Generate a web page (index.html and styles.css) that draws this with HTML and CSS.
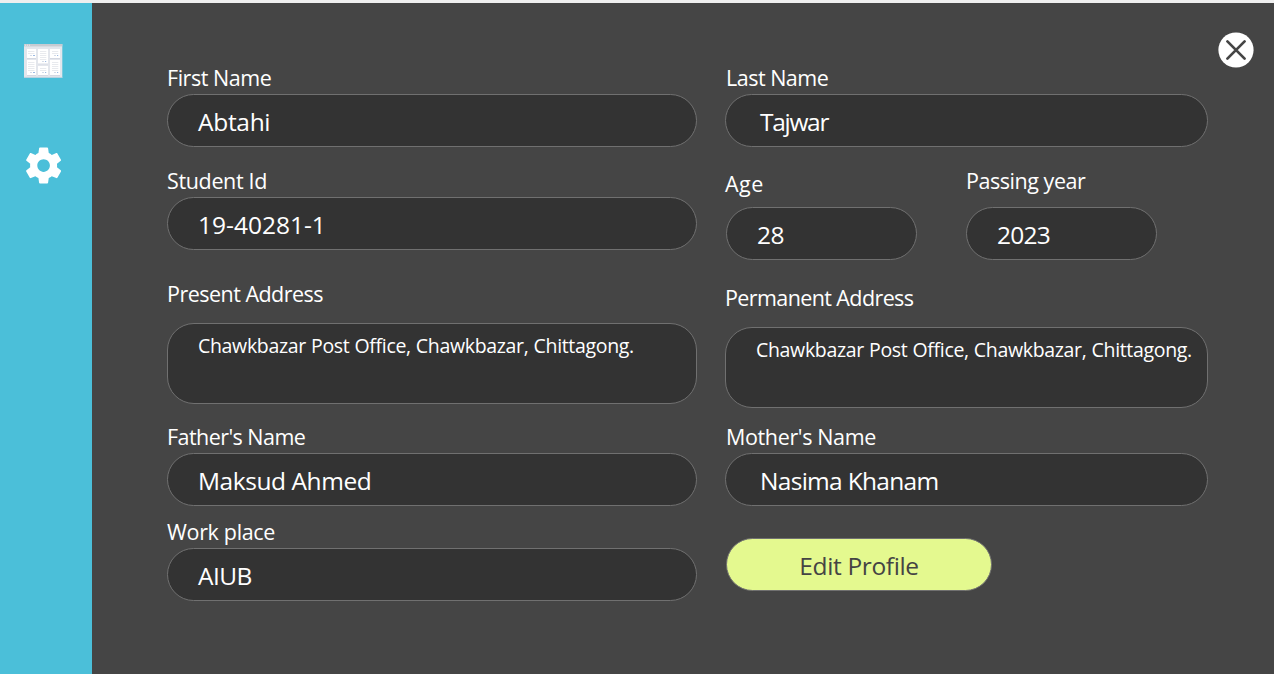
FILE: index.html
```html
<!DOCTYPE html>
<html lang="en">
<head>
<meta charset="utf-8">
<title>Profile</title>
<link rel="stylesheet" href="styles.css">
</head>
<body>
<div class="app">
  <nav class="sidebar">
    <svg class="board-icon" width="39" height="34" viewBox="0 0 39 34">
      <rect width="38.3" height="33.7" fill="#e3e6ec"/>
      <rect width="38.3" height="2.4" fill="#c6cbd2"/>
      <path d="M1 1.2h1M3 1.2h1M5 1.2h1" stroke="#e8ebef" stroke-width="1"/>
      <path d="M0 33.4h38.5" stroke="#b9cfdd" stroke-width=".8"/>
      <g fill="#cfd3de"><path d="M3 14h9v.8H3zM14 19.5h10v.8H14zM26 14h10v.8H26zM3 31h9v.8H3zM14 31h10v.8H14zM26 31h10v.8H26z"/></g>
      <g fill="#fff"><path d="M3 5h9v9H3zM14 5h10v14.5H14zM26 5h10v9H26zM3 16h9v15H3zM14 22h10v9H14zM26 16h10v15H26z"/></g>
      <path d="M4 7.5h6.5M4 9.5h6.5M16 7.5h6.3M16 9.5h6.3M16 11.5h6.3M16 13.5h6.3M16 15.5h6.3M28 7.5h6.3M28 9.5h6.3M4 18.5h6.5M4 20.5h6.5M4 22.5h6.5M4 24.5h6.5M4 26.5h6.5M16 24.5h6.3M16 26.5h6.3M28 18.5h6.3M28 20.5h6.3M28 22.5h6.3M28 24.5h6.3M28 26.5h6.3" stroke="#e8eaee"/>
      <path d="M6 11.5h2M30 11.5h2M18 17.5h2M6 28.5h2M18 28.5h2M30 28.5h2" stroke="#d3dbe8"/>
      <path d="M9 11.5h2M33 11.5h1.2M21 17.5h1.2M9 28.5h2M21 28.5h1.2M33 28.5h1.2" stroke="#9bbae3"/>
    </svg>
    <svg class="gear-icon" width="43.2" height="43.2" viewBox="0 0 24 24">
      <path fill="#fff" d="M19.43 12.98c.04-.32.07-.64.07-.98s-.03-.66-.07-.98l2.11-1.65c.19-.15.24-.42.12-.64l-2-3.46c-.12-.22-.39-.3-.61-.22l-2.49 1c-.52-.4-1.08-.73-1.69-.98l-.38-2.65C14.46 2.18 14.25 2 14 2h-4c-.25 0-.46.18-.49.42l-.38 2.65c-.61.25-1.17.59-1.69.98l-2.49-1c-.23-.09-.49 0-.61.22l-2 3.46c-.13.22-.07.49.12.64l2.11 1.65c-.04.32-.07.65-.07.98s.03.66.07.98l-2.11 1.65c-.19.15-.24.42-.12.64l2 3.46c.12.22.39.3.61.22l2.49-1c.52.4 1.08.73 1.69.98l.38 2.65c.03.24.24.42.49.42h4c.25 0 .46-.18.49-.42l.38-2.65c.61-.25 1.17-.59 1.69-.98l2.49 1c.23.09.49 0 .61-.22l2-3.46c.12-.22.07-.49-.12-.64l-2.11-1.65zM12 15.5c-1.93 0-3.5-1.57-3.5-3.5s1.57-3.5 3.5-3.5 3.5 1.57 3.5 3.5-1.57 3.5-3.5 3.5z"/>
    </svg>
  </nav>
  <main class="profile">
    <section class="column left">
      <div class="field first"><div class="label">First Name</div><div class="box">Abtahi</div></div>
      <div class="field student"><div class="label">Student Id</div><div class="box">19-40281-1</div></div>
      <div class="field address present"><div class="label">Present Address</div><div class="box">Chawkbazar Post Office, Chawkbazar, Chittagong.</div></div>
      <div class="field father"><div class="label">Father's Name</div><div class="box">Maksud Ahmed</div></div>
      <div class="field work"><div class="label">Work place</div><div class="box">AIUB</div></div>
    </section>
    <section class="column right">
      <div class="field last"><div class="label">Last Name</div><div class="box">Tajwar</div></div>
      <div class="pair">
        <div class="field age"><div class="label">Age</div><div class="box">28</div></div>
        <div class="field passing"><div class="label">Passing year</div><div class="box">2023</div></div>
      </div>
      <div class="field address permanent"><div class="label">Permanent Address</div><div class="box">Chawkbazar Post Office, Chawkbazar, Chittagong.</div></div>
      <div class="field mother"><div class="label">Mother's Name</div><div class="box">Nasima Khanam</div></div>
      <button class="edit">Edit Profile</button>
    </section>
    <svg class="close" width="36" height="36" viewBox="0 0 36 36">
      <circle cx="18" cy="18" r="17.6" fill="#fff"/>
      <path d="M9.4 9.4l17.2 17.2M26.6 9.4L9.4 26.6" stroke="#454545" stroke-width="2.7" stroke-linecap="round"/>
    </svg>
  </main>
</div>
</body>
</html>
```
FILE: styles.css
```css
* { box-sizing: border-box; }
body {
  margin: 0;
  background: #454545;
  color: #fff;
  font-family: "Open Sans", "Noto Sans", sans-serif;
}
.app {
  display: flex;
  height: 674px;
  border-top: 3px solid #efefef;
  overflow: hidden;
}
.sidebar {
  width: 92px;
  flex: none;
  background: #4bbfd9;
  display: flex;
  flex-direction: column;
  padding: 41px 0 0 24px;
}
.board-icon { display: block; }
.gear-icon { display: block; margin: 65.5px 0 0 -2px; }
.profile {
  flex: 1;
  display: flex;
  padding: 60px 0 0 75px;
}
.column { display: flex; flex-direction: column; }
.left { width: 530px; }
.right { width: 483px; margin-left: 28px; }
.label {
  height: 28px;
  line-height: 30px;
  margin-bottom: 3px;
  font-size: 21.5px;
  white-space: nowrap;
}
.box {
  height: 53px;
  padding: 1px 0 0 30px;
  border: 1px solid #707070;
  border-radius: 27px;
  background: #333;
  font-size: 24.5px;
  line-height: 51px;
  white-space: nowrap;
}
.address .label { margin-bottom: 16px; }
.address .box {
  height: 81px;
  padding-top: 8px;
  font-size: 19.5px;
  line-height: 27px;
  letter-spacing: -0.32px;
  word-spacing: 0.3px;
}
.student { margin-top: 19px; }
.present { margin-top: 29px; }
.father { margin-top: 18px; }
.work { margin-top: 11px; }
.pair {
  display: flex;
  align-items: flex-start;
  gap: 49px;
  margin: 19px 0 0 1px;
}
.pair .box { width: 191px; }
.age { padding-top: 3px; }
.age .label { margin: 0 0 10px -1px; letter-spacing: 0.5px; }
.passing .label { margin-bottom: 13px; }
.permanent { margin-top: 23px; }
.mother { margin-top: 14px; }
.last .box { padding-left: 34px; letter-spacing: -1.3px; }
.mother .box { padding-left: 34px; letter-spacing: -0.7px; }
.first .label { letter-spacing: -0.45px; }
.first .box { letter-spacing: -0.3px; }
.student .label { letter-spacing: -0.35px; }
.student .box { letter-spacing: 0; }
.present .label { letter-spacing: -0.52px; }
.father .label { letter-spacing: -0.55px; }
.father .box { letter-spacing: -0.44px; }
.work .label { letter-spacing: -0.33px; }
.work .box { letter-spacing: -0.6px; }
.last .label { letter-spacing: -0.5px; margin-left: 1px; }
.age .box { letter-spacing: -0.5px; }
.passing .label { letter-spacing: -0.46px; }
.passing .box { letter-spacing: -0.8px; }
.permanent .label { letter-spacing: -0.6px; }
.mother .label { letter-spacing: -0.36px; margin-left: 1px; }
.edit {
  width: 266px;
  height: 53px;
  margin: 32px 0 0 1px;
  padding: 1px 0 0;
  border: 1px solid #707070;
  border-radius: 27px;
  background: #e4f98f;
  color: #444;
  font: 24.5px/51px "Open Sans", "Noto Sans", sans-serif;
  letter-spacing: -0.37px;
}
.close { margin: -31px 0 0 10px; flex: none; }
```
